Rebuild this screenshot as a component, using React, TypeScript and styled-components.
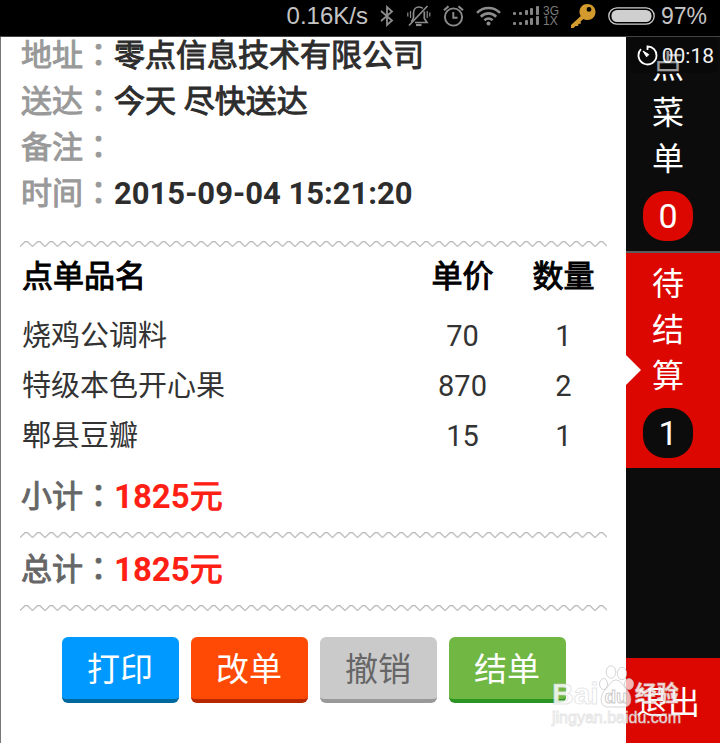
import React from "react";
import styled, { createGlobalStyle } from "styled-components";

const GlobalStyle = createGlobalStyle`
  * { box-sizing: border-box; }
  body {
    margin: 0;
    background: #fff;
    font-family: Roboto, "Noto Sans CJK SC", sans-serif;
  }
  button { font-family: inherit; border: 0; padding: 0; cursor: pointer; }
`;

const Screen = styled.div`
  display: flex;
  flex-direction: column;
  min-height: 100vh;
  padding-right: 1px;
`;

const StatusBar = styled.header`
  display: flex;
  align-items: center;
  justify-content: flex-end;
  gap: 12px;
  height: 37px;
  padding: 0 13px 4px 0;
  background: #000;
  border-bottom: 1px solid #444;
  color: #c4c4c4;
  font-family: "Liberation Sans", Arial, sans-serif;
  font-size: 24px;
  line-height: 32px;

  svg { display: block; flex: none; }
`;

const BatteryGroup = styled.div`
  display: flex;
  align-items: center;
  gap: 6px;
  font-size: 23px;
`;

const Cellular = styled.div`
  display: flex;
  align-items: center;
  gap: 4px;
  color: #7c7c7c;
  font-size: 12px;
  line-height: 10px;
`;

const NetworkNames = styled.div`
  display: flex;
  flex-direction: column;
  width: 16px;
`;

const Body = styled.div`
  display: flex;
  flex: 1;
`;

const Content = styled.main`
  flex: 1;
  min-width: 0;
  overflow: hidden;
  padding: 0 19px 39px;
  border-left: 1px solid #777;
  background: #fff;
`;

const Details = styled.dl`
  margin: -4px 0 24px;
`;

const DetailRow = styled.div`
  display: flex;
  height: 46px;
  padding-left: 1px;
  font-size: 31px;
  line-height: 46px;
  white-space: nowrap;
`;

const Label = styled.dt<{ $dark?: boolean }>`
  color: ${(p) => (p.$dark ? "#666" : "#999")};
  -webkit-text-stroke: 1px currentColor;
`;

const Value = styled.dd<{ $bold?: boolean }>`
  margin: 0;
  color: #2d2d2d;
  font-weight: ${(p) => (p.$bold ? 700 : 400)};
  -webkit-text-stroke: ${(p) => (p.$bold ? 0 : 1)}px currentColor;
`;

const Price = styled.dd`
  margin: 0;
  color: #ff1f14;
  font-size: 33px;
  font-weight: 700;
`;

const Unit = styled.span`
  font-weight: 400;
  -webkit-text-stroke: 1px currentColor;
`;

const TotalRow = styled(DetailRow)`
  height: 67px;
  line-height: 64px;
`;

const Totals = styled.dl`
  margin: 0;
`;

const Zigzag = styled.svg`
  display: block;
  width: 100%;
  height: 6px;
`;

const ItemTable = styled.table`
  width: 100%;
  table-layout: fixed;
  border-collapse: collapse;
  margin: 5px 0 4px;
`;

const HeadCell = styled.th<{ $width?: number }>`
  width: ${(p) => (p.$width ? `${p.$width}px` : "auto")};
  height: 59px;
  padding: 0;
  color: #000;
  font-size: 31px;
  font-weight: 400;
  line-height: 50px;
  text-align: center;
  vertical-align: top;
  -webkit-text-stroke: 1px currentColor;

  &:first-child { padding-left: 2px; text-align: left; }
`;

const Cell = styled.td<{ $numeric?: boolean }>`
  height: 50px;
  padding: 0 0 0 ${(p) => (p.$numeric ? 0 : 2)}px;
  color: #333;
  font-size: 29px;
  line-height: 50px;
  text-align: ${(p) => (p.$numeric ? "center" : "left")};
`;

const Actions = styled.div`
  display: flex;
  justify-content: center;
  gap: 12px;
  margin-top: 26px;
`;

const ActionButton = styled.button<{ $bg: string; $edge: string; $color?: string }>`
  width: 117px;
  height: 66px;
  padding-top: 3px;
  border-bottom: 4px solid ${(p) => p.$edge};
  border-radius: 6px;
  background: ${(p) => p.$bg};
  color: ${(p) => p.$color ?? "#fff"};
  font-size: 33px;
  line-height: 59px;
`;

const Sidebar = styled.nav`
  position: relative;
  display: flex;
  flex-direction: column;
  flex: none;
  width: 94px;
  background: #0c0c0c;
`;

const Tab = styled.button<{ $active?: boolean }>`
  position: relative;
  display: flex;
  flex-direction: column;
  align-items: center;
  width: 100%;
  padding: ${(p) => (p.$active ? 8 : 7)}px 10px 10px 0;
  background: ${(p) => (p.$active ? "#dc0700" : "#0c0c0c")};
  border-top: ${(p) => (p.$active ? "2px solid #5a5a5a" : "0")};
  color: #fff;
  font-size: 32px;
  line-height: 46px;
`;

const Pointer = styled.svg`
  position: absolute;
  left: 0;
  bottom: 83px;
`;

const Count = styled.span<{ $bg: string }>`
  width: 50px;
  height: 50px;
  margin-top: 9px;
  border-radius: 22px;
  background: ${(p) => p.$bg};
  font-size: 34px;
  line-height: 50px;
`;

const ExitButton = styled.button`
  height: 85px;
  margin-top: auto;
  padding: 0 10px 2px 0;
  background: #dc0700;
  color: #fff;
  font-size: 32px;
`;

const Timer = styled.div`
  position: absolute;
  top: 0;
  right: 2px;
  display: flex;
  align-items: center;
  justify-content: flex-end;
  gap: 4px;
  width: 88px;
  height: 36px;
  padding: 1px 4px 0 0;
  border-radius: 6px;
  background: rgba(4, 4, 4, 0.4);
  color: #f2f2f2;
  font-size: 21px;
`;

const Watermark = styled.div`
  position: absolute;
  right: 41px;
  bottom: 16px;
  display: flex;
  flex-direction: column;
  width: 127px;
  color: rgba(255, 255, 255, 0.85);
  font-family: "Liberation Sans", "Noto Sans CJK SC", sans-serif;
  -webkit-text-stroke: 1px rgba(205, 205, 205, 0.5);
  white-space: nowrap;
  pointer-events: none;
`;

const WatermarkLogo = styled.div`
  display: flex;
  align-items: flex-end;
  height: 44px;
  font-size: 30px;
  font-weight: 700;
  line-height: 30px;

  svg { flex: none; }
`;

const WatermarkSuffix = styled.span`
  font-size: 22px;
`;

const WatermarkSite = styled.div`
  font-size: 16px;
  line-height: 18px;
`;

function Divider({ id }: { id: string }) {
  return (
    <Zigzag aria-hidden="true">
      <defs>
        <pattern id={id} width="12.5" height="6" patternUnits="userSpaceOnUse">
          <path d="M-.5 6 L5 .7 H7.5 L12.5 5.5 L13.5 4.7 M-1 4.7 L0 5.5" fill="none" stroke="#b8b8b8" strokeWidth="1.2" />
        </pattern>
      </defs>
      <rect width="100%" height="6" fill={`url(#${id})`} />
    </Zigzag>
  );
}

const BluetoothIcon = () => (
  <svg width="15" height="22" viewBox="0 0 15 22" fill="none" stroke="#8c8c8c" strokeWidth="1.8" aria-hidden="true">
    <path d="M1 6 L12 15.5 L7 20 V2 L12 6.5 L1 16" />
  </svg>
);

const MutedBellIcon = () => (
  <svg width="24" height="22" viewBox="0 0 24 22" fill="none" stroke="#8c8c8c" strokeWidth="1.7" aria-hidden="true">
    <path d="M6.5 13 V8 C6.5 4 9 2 12 2 C13.5 2 14.8 2.5 15.8 3.4 M17.3 6.5 V13.5 L20 17.5 H8 M4.5 16.8 L6.5 13" />
    <path d="M2 20.5 L20.5 1" />
    <path d="M9 20 H14.5" strokeWidth="2.2" />
    <path d="M3.5 6 V13 M.8 7.5 V11.5 M20.2 6 V13 M22.8 7.5 V11.5" strokeWidth="1.2" />
  </svg>
);

const AlarmIcon = () => (
  <svg width="21" height="22" viewBox="0 0 21 22" fill="none" stroke="#8c8c8c" strokeWidth="1.9" aria-hidden="true">
    <circle cx="10.5" cy="12" r="8.6" />
    <path d="M10.3 7 V12.7 H14.5" />
    <path d="M1 5.3 L5.5 1.2 M15.5 1.2 L20 5.3" strokeWidth="2.1" />
  </svg>
);

const WifiIcon = () => (
  <svg width="25" height="20" viewBox="0 0 25 20" fill="none" stroke="#8c8c8c" strokeWidth="2.6" aria-hidden="true">
    <path d="M1 6.8 C7.5 .3 17.5 .3 24 6.8" />
    <path d="M4.8 10.7 C9.3 6.3 15.7 6.3 20.2 10.7" />
    <path d="M8.4 14.3 C11 12 14 12 16.6 14.3" />
    <circle cx="12.5" cy="17.5" r="2" fill="#8c8c8c" stroke="none" />
  </svg>
);

const SignalIcon = () => (
  <svg width="26" height="20" viewBox="0 0 26 20" fill="#858585" aria-hidden="true">
    {[0, 10].map((top) => (
      <g key={top}>
        <rect x="0" y={top + 6} width="3" height="3" rx="1" />
        <rect x="6" y={top + 6} width="3" height="3" rx="1" />
        <rect x="12" y={top + 4} width="3" height="5" rx="1" />
        <rect x="17" y={top + 2} width="3" height="7" rx="1" />
        <rect x="23" y={top} width="3" height="9" rx="1" />
      </g>
    ))}
  </svg>
);

const KeyIcon = () => (
  <svg width="25" height="25" viewBox="0 0 25 25" aria-hidden="true">
    <path
      fill="#d39a2d"
      fillRule="evenodd"
      d="M16 0 C21 0 24.5 3.5 24.5 8 C24.5 12.5 21 16 16.5 16 C14.8 16 13.6 15.6 12.5 15 L9.5 17.5 L10 19.5 L7.5 20 L7 22 H4.5 L2.5 24 H0 V21 L9.8 12 C8.9 10.8 8.5 9.5 8.5 8 C8.5 3.5 12 0 16 0 Z M18 3 A2.4 2.4 0 1 0 18 7.8 A2.4 2.4 0 1 0 18 3 Z"
    />
  </svg>
);

const BatteryIcon = () => (
  <svg width="47" height="18" viewBox="0 0 47 18" aria-hidden="true">
    <rect x=".8" y=".8" width="45.4" height="16.4" rx="8.2" fill="#000" stroke="#cfcfcf" strokeWidth="1.3" />
    <rect x="3.5" y="3" width="40" height="12" rx="5.5" fill="#cfcfcf" />
  </svg>
);

const StopwatchIcon = () => (
  <svg width="21" height="21" viewBox="0 0 21 21" fill="none" stroke="#fff" strokeWidth="1.8" aria-hidden="true">
    <path d="M10.5 5 V1.5 C16 1.5 19.5 5.5 19.5 10.5 A9 9 0 1 1 4 4.2" />
    <path d="M6 6 L11.8 9.6 L9.6 11.8 Z" fill="#fff" strokeWidth="1" />
  </svg>
);

const PawIcon = () => (
  <svg width="36" height="44" viewBox="0 0 36 44" aria-hidden="true">
    <g fill="rgba(255,255,255,.7)" stroke="rgba(190,190,190,.65)" strokeWidth="1">
      <ellipse cx="4.5" cy="19" rx="4" ry="5.5" />
      <ellipse cx="12" cy="7" rx="4.8" ry="6.2" />
      <ellipse cx="23" cy="8.5" rx="4.6" ry="6.2" />
      <ellipse cx="30" cy="19" rx="4.6" ry="5.5" />
      <path d="M17 15 C22 15 24 21 28 25 C33 30 34 42 25 42 H9 C0 42 1 30 6 25 C10 21 12 15 17 15 Z" />
    </g>
    <text x="17" y="38" textAnchor="middle" fontSize="19" fontWeight="700" fill="rgba(255,255,255,.8)" stroke="rgba(180,180,180,.7)" strokeWidth="1">
      du
    </text>
  </svg>
);

const details = [
  { label: "地址", value: "零点信息技术有限公司" },
  { label: "送达", value: "今天 尽快送达" },
  { label: "备注", value: "" },
  { label: "时间", value: "2015-09-04 15:21:20", bold: true },
];

const items = [
  { name: "烧鸡公调料", price: 70, quantity: 1 },
  { name: "特级本色开心果", price: 870, quantity: 2 },
  { name: "郫县豆瓣", price: 15, quantity: 1 },
];

const totals = [
  { id: "subtotal", label: "小计", amount: 1825 },
  { id: "total", label: "总计", amount: 1825 },
];

export default function App() {
  return (
    <Screen lang="zh-CN">
      <GlobalStyle />
      <StatusBar>
        <span>0.16K/s</span>
        <BluetoothIcon />
        <MutedBellIcon />
        <AlarmIcon />
        <WifiIcon />
        <Cellular>
          <SignalIcon />
          <NetworkNames>
            <span>3G</span>
            <span>1X</span>
          </NetworkNames>
        </Cellular>
        <KeyIcon />
        <BatteryGroup>
          <BatteryIcon />
          <span>97%</span>
        </BatteryGroup>
      </StatusBar>
      <Body>
        <Content>
          <Details>
            {details.map((d) => (
              <DetailRow key={d.label}>
                <Label>
                  {d.label}
                  <span lang="zh-TW">：</span>
                </Label>
                <Value $bold={d.bold}>{d.value}</Value>
              </DetailRow>
            ))}
          </Details>
          <Divider id="zigzag-details" />
          <ItemTable>
            <thead>
              <tr>
                <HeadCell scope="col">点单品名</HeadCell>
                <HeadCell scope="col" $width={115}>单价</HeadCell>
                <HeadCell scope="col" $width={87}>数量</HeadCell>
              </tr>
            </thead>
            <tbody>
              {items.map((item) => (
                <tr key={item.name}>
                  <Cell>{item.name}</Cell>
                  <Cell $numeric>{item.price}</Cell>
                  <Cell $numeric>{item.quantity}</Cell>
                </tr>
              ))}
            </tbody>
          </ItemTable>
          {totals.map((t) => (
            <React.Fragment key={t.id}>
              <Totals>
                <TotalRow>
                  <Label $dark>
                    {t.label}
                    <span lang="zh-TW">：</span>
                  </Label>
                  <Price>
                    {t.amount}
                    <Unit>元</Unit>
                  </Price>
                </TotalRow>
              </Totals>
              <Divider id={`zigzag-${t.id}`} />
            </React.Fragment>
          ))}
          <Actions>
            <ActionButton $bg="#0099ff" $edge="#00689c">打印</ActionButton>
            <ActionButton $bg="#ff4a05" $edge="#b82800">改单</ActionButton>
            <ActionButton $bg="#cacaca" $edge="#999" $color="#666">撤销</ActionButton>
            <ActionButton $bg="#71b744" $edge="#2b9422">结单</ActionButton>
          </Actions>
        </Content>
        <Sidebar>
          <Tab>
            <span>点</span>
            <span>菜</span>
            <span>单</span>
            <Count $bg="#dc0700">0</Count>
          </Tab>
          <Tab $active>
            <Pointer width="15" height="30" viewBox="0 0 15 30" aria-hidden="true">
              <path d="M0 0 L15 15 L0 30 Z" fill="#fff" />
            </Pointer>
            <span>待</span>
            <span>结</span>
            <span>算</span>
            <Count $bg="#0c0c0c">1</Count>
          </Tab>
          <ExitButton>退出</ExitButton>
          <Timer>
            <StopwatchIcon />
            <span>00:18</span>
          </Timer>
          <Watermark aria-hidden="true">
            <WatermarkLogo>
              <span>Bai</span>
              <PawIcon />
              <WatermarkSuffix>经验</WatermarkSuffix>
            </WatermarkLogo>
            <WatermarkSite>jingyan.baidu.com</WatermarkSite>
          </Watermark>
        </Sidebar>
      </Body>
    </Screen>
  );
}
